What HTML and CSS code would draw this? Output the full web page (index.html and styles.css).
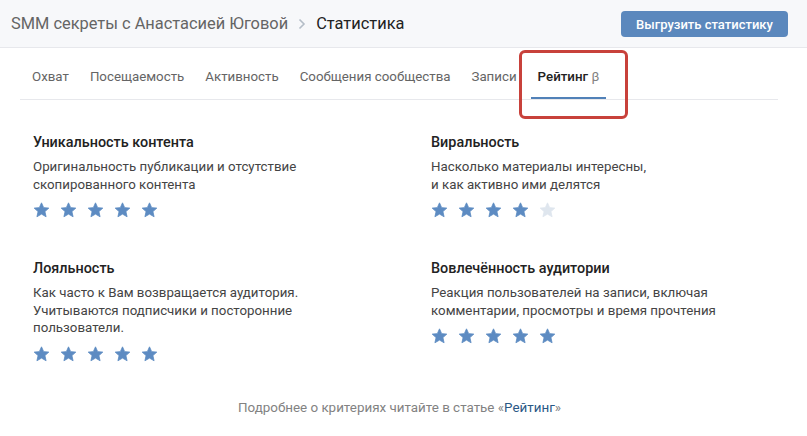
FILE: index.html
```html
<!DOCTYPE html>
<html lang="ru">
  <head>
    <meta charset="UTF-8" />
    <title>Статистика</title>
    <link rel="stylesheet" href="styles.css">
  </head>
  <body>
    <div class="page">
      <header class="head">
        <div class="crumbs">
          <span class="crumb">SMM секреты с Анастасией Юговой</span>
          <svg class="chev" width="8" height="12" viewBox="0 0 8 12"><path d="M1.5 1.5 6 6l-4.5 4.5" fill="none" stroke="#b4bdc7" stroke-width="1.6"/></svg>
          <span class="crumb current">Статистика</span>
        </div>
        <button class="btn">Выгрузить статистику</button>
      </header>

      <nav class="tabs">
        <a class="tab">Охват</a>
        <a class="tab">Посещаемость</a>
        <a class="tab">Активность</a>
        <a class="tab">Сообщения сообщества</a>
        <a class="tab">Записи</a>
        <a class="tab active">Рейтинг&nbsp;<span class="beta">β</span></a>
      </nav>

      <section class="grid">
        <div class="card">
          <h3>Уникальность контента</h3>
          <p>Оригинальность публикации и отсутствие<br>скопированного контента</p>
          <div class="stars" data-n="5"></div>
        </div>
        <div class="card">
          <h3>Виральность</h3>
          <p>Насколько материалы интересны,<br>и как активно ими делятся</p>
          <div class="stars" data-n="4"></div>
        </div>
        <div class="card">
          <h3>Лояльность</h3>
          <p>Как часто к Вам возвращается аудитория.<br>Учитываются подписчики и посторонние<br>пользователи.</p>
          <div class="stars" data-n="5"></div>
        </div>
        <div class="card">
          <h3>Вовлечённость аудитории</h3>
          <p>Реакция пользователей на записи, включая<br>комментарии, просмотры и время прочтения</p>
          <div class="stars" data-n="5"></div>
        </div>
      </section>

      <p class="foot">Подробнее о критериях читайте в статье «<a>Рейтинг</a>»</p>
    </div>
    <script>
      const star = (on) =>
        `<svg class="star${on ? "" : " off"}" width="17" height="16" viewBox="0 0 24 23"><path d="M12 1.2l3.1 6.9 7.4.7-5.6 5 1.7 7.4L12 17.4l-6.6 3.8 1.7-7.4-5.6-5 7.4-.7z" stroke-linejoin="round" stroke-width="1.2"/></svg>`;
      document.querySelectorAll(".stars").forEach((el) => {
        const n = +el.dataset.n;
        el.innerHTML = [0, 1, 2, 3, 4].map((i) => star(i < n)).join("");
      });
    </script>
  </body>
</html>
```

FILE: styles.css
```css
html {
  background: #fff;
  font-family: Roboto, "Liberation Sans", Arial, sans-serif;
  color: #222;
}
body {
  margin: 0;
}
.head {
  height: 47px;
  display: flex;
  align-items: center;
  justify-content: space-between;
  padding: 0 19px 0 11px;
  background: #f7f8fa;
  border-bottom: 1px solid #e7e8ec;
}
.crumbs {
  display: flex;
  align-items: center;
  gap: 10px;
  font-size: 16.4px;
}
.crumb {
  color: #656565;
}
.crumb.current {
  color: #222;
}
.btn {
  font: 500 13px Roboto, "Liberation Sans", Arial, sans-serif;
  color: #fff;
  background: #5b88bd;
  border: none;
  border-radius: 4px;
  height: 26px;
  width: 167px;
  margin-top: 1px;
}
.tabs {
  display: flex;
  gap: 7px;
  margin: 0 29px 0 20px;
  padding-left: 5px;
  height: 51px;
  border-bottom: 1px solid #e7e8ec;
}
.tab {
  position: relative;
  display: flex;
  align-items: center;
  padding: 7px 7px 2px;
  font-size: 13.3px;
  color: #656565;
}
.tab.active {
  color: #222;
  font-weight: 500;
  border-bottom: 2px solid #5181b8;
  padding-bottom: 0;
}
.beta {
  font-weight: 400;
  color: #828282;
}
.tab.active::after {
  content: "";
  position: absolute;
  left: -12px;
  right: -22px;
  top: 2px;
  bottom: -22px;
  border: 3px solid #c8413b;
  border-radius: 6px;
}
.grid {
  display: grid;
  grid-template-columns: 398px 1fr;
  row-gap: 41px;
  padding: 33px 0 0 33px;
}
.card h3 {
  margin: 0 0 5px;
  font-size: 14.4px;
  font-weight: 500;
  line-height: 20px;
  color: #222;
}
.card p {
  margin: 0;
  font-size: 13.3px;
  line-height: 17.5px;
  color: #444;
}
.stars {
  display: flex;
  gap: 10px;
  margin-top: 9px;
}
.star {
  display: block;
  fill: #5d8bc2;
  stroke: #5d8bc2;
}
.star.off {
  fill: #dfe6ee;
  stroke: #dfe6ee;
}
.foot {
  margin: 38px 0 0;
  padding-right: 8px;
  text-align: center;
  font-size: 13.4px;
  color: #828282;
}
.foot a {
  color: #2a5885;
}
```
